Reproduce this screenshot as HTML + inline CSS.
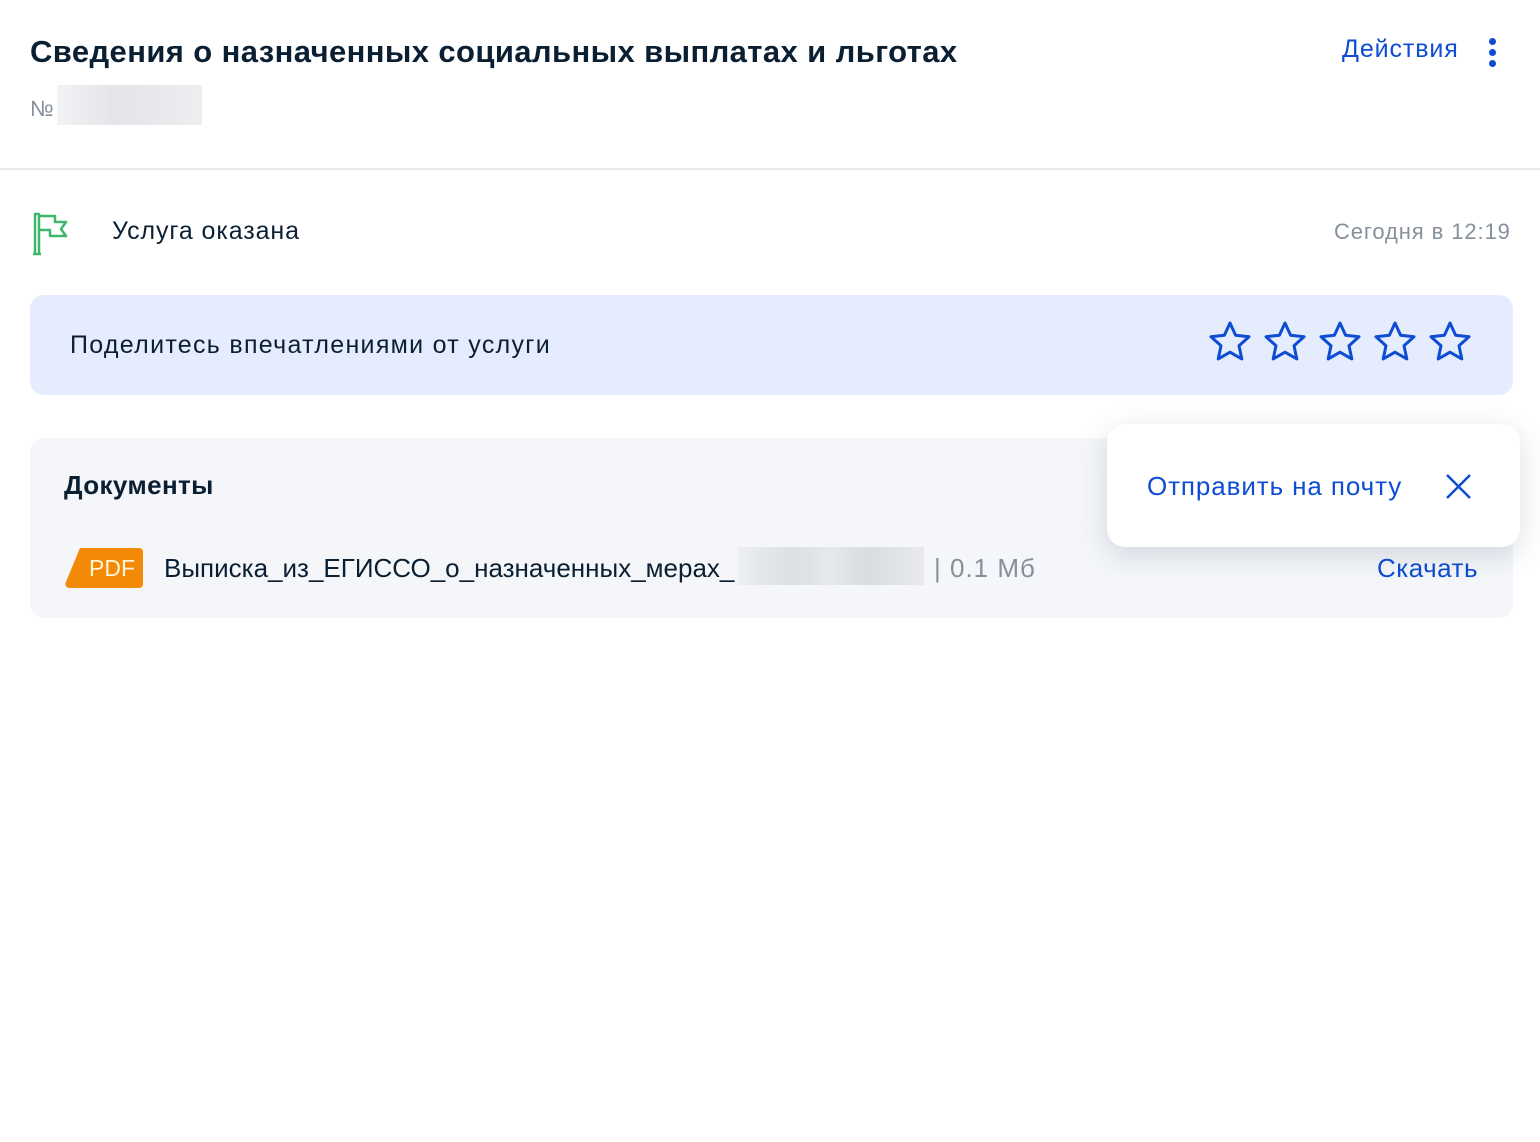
<!DOCTYPE html>
<html><head><meta charset="utf-8"><style>
body{margin:0;width:1540px;height:1142px;background:#fff;font-family:"Liberation Sans","Noto Sans CJK SC",sans-serif;position:relative;overflow:hidden;color:#0b1f33}
.a{position:absolute;white-space:nowrap}
</style></head><body>
<div class="a" style="left:30px;top:34px;font-size:31px;font-weight:bold;color:#0b1f33;letter-spacing:0.4px">Сведения о назначенных социальных выплатах и льготах</div>
<div class="a" style="left:30px;top:96px;font-size:22px;color:#86909c">№</div>
<div class="a" style="left:57px;top:85px;width:145px;height:40px;background:linear-gradient(90deg,#f2f3f5,#e3e5e8 40%,#e7e9ec 70%,#eceef0)"></div>
<div class="a" style="left:1342px;top:35px;font-size:25px;color:#0d4cd3;letter-spacing:0.9px">Действия</div>
<div class="a" style="left:1489px;top:38px;width:7px;height:7px;border-radius:50%;background:#0d4cd3"></div>
<div class="a" style="left:1489px;top:49px;width:7px;height:7px;border-radius:50%;background:#0d4cd3"></div>
<div class="a" style="left:1489px;top:60px;width:7px;height:7px;border-radius:50%;background:#0d4cd3"></div>
<div class="a" style="left:0;top:168px;width:1540px;height:2px;background:#e6e8ec"></div>
<svg class="a" style="left:30px;top:210px" width="40" height="46" viewBox="0 0 40 46"><path d="M3 44h8M5 44V4h4v40M9 6h16v6h11l-5 7 5 7H20v-6H9" fill="none" stroke="#3fb86d" stroke-width="2.5" stroke-linejoin="round"/></svg>
<div class="a" style="left:112px;top:217px;font-size:25px;letter-spacing:0.9px">Услуга оказана</div>
<div class="a" style="left:1334px;top:219px;font-size:22px;color:#86909c;letter-spacing:0.9px">Сегодня в 12:19</div>
<div class="a" style="left:30px;top:295px;width:1483px;height:100px;background:#e4ecfd;border-radius:14px"></div>
<div class="a" style="left:70px;top:331px;font-size:25px;letter-spacing:1.3px">Поделитесь впечатлениями от услуги</div>
<svg class="a" style="left:1206px;top:318px" width="272" height="48" viewBox="0 0 272 48">
<defs><path id="s" d="M24 5l5.6 12.3 13.4 1.4-10 9 2.8 13.2L24 34.2l-11.8 6.7L15 27.7l-10-9 13.4-1.4z" fill="none" stroke="#0d4cd3" stroke-width="3" stroke-linejoin="round"/></defs>
<use href="#s"/><use href="#s" x="55"/><use href="#s" x="110"/><use href="#s" x="165"/><use href="#s" x="220"/></svg>
<div class="a" style="left:30px;top:438px;width:1483px;height:180px;background:#f4f6f9;border-radius:14px"></div>
<div class="a" style="left:64px;top:470px;font-size:26px;font-weight:bold;letter-spacing:0.4px">Документы</div>
<svg class="a" style="left:64px;top:547px" width="80" height="42"><path d="M16 1h59a4 4 0 0 1 4 4v32a4 4 0 0 1-4 4H5a4 4 0 0 1-3.5-5z" fill="#f28a07"/><text x="25" y="29" font-family="Liberation Sans" font-size="23" fill="#fff4d6">PDF</text></svg>
<div class="a" style="left:164px;top:553px;font-size:26px">Выписка_из_ЕГИССО_о_назначенных_мерах_</div>
<div class="a" style="left:738px;top:547px;width:186px;height:38px;background:linear-gradient(90deg,#eceef1,#dcdfe3 30%,#e6e8eb 50%,#d9dce0 70%,#e8eaed)"></div>
<div class="a" style="left:934px;top:553px;font-size:26px;color:#86909c;letter-spacing:1px">| 0.1 Мб</div>
<div class="a" style="left:1377px;top:553px;font-size:26px;color:#0d4cd3;letter-spacing:0.5px">Скачать</div>
<div class="a" style="left:1107px;top:424px;width:413px;height:123px;background:#fff;border-radius:18px;box-shadow:0 8px 28px rgba(50,70,100,.18)"></div>
<div class="a" style="left:1147px;top:471px;font-size:26px;color:#0d4cd3;letter-spacing:0.9px">Отправить на почту</div>
<svg class="a" style="left:1445px;top:473px" width="27" height="27"><path d="M2 2l23 23M25 2L2 25" stroke="#0d4cd3" stroke-width="2.5"/></svg>
</body></html>
